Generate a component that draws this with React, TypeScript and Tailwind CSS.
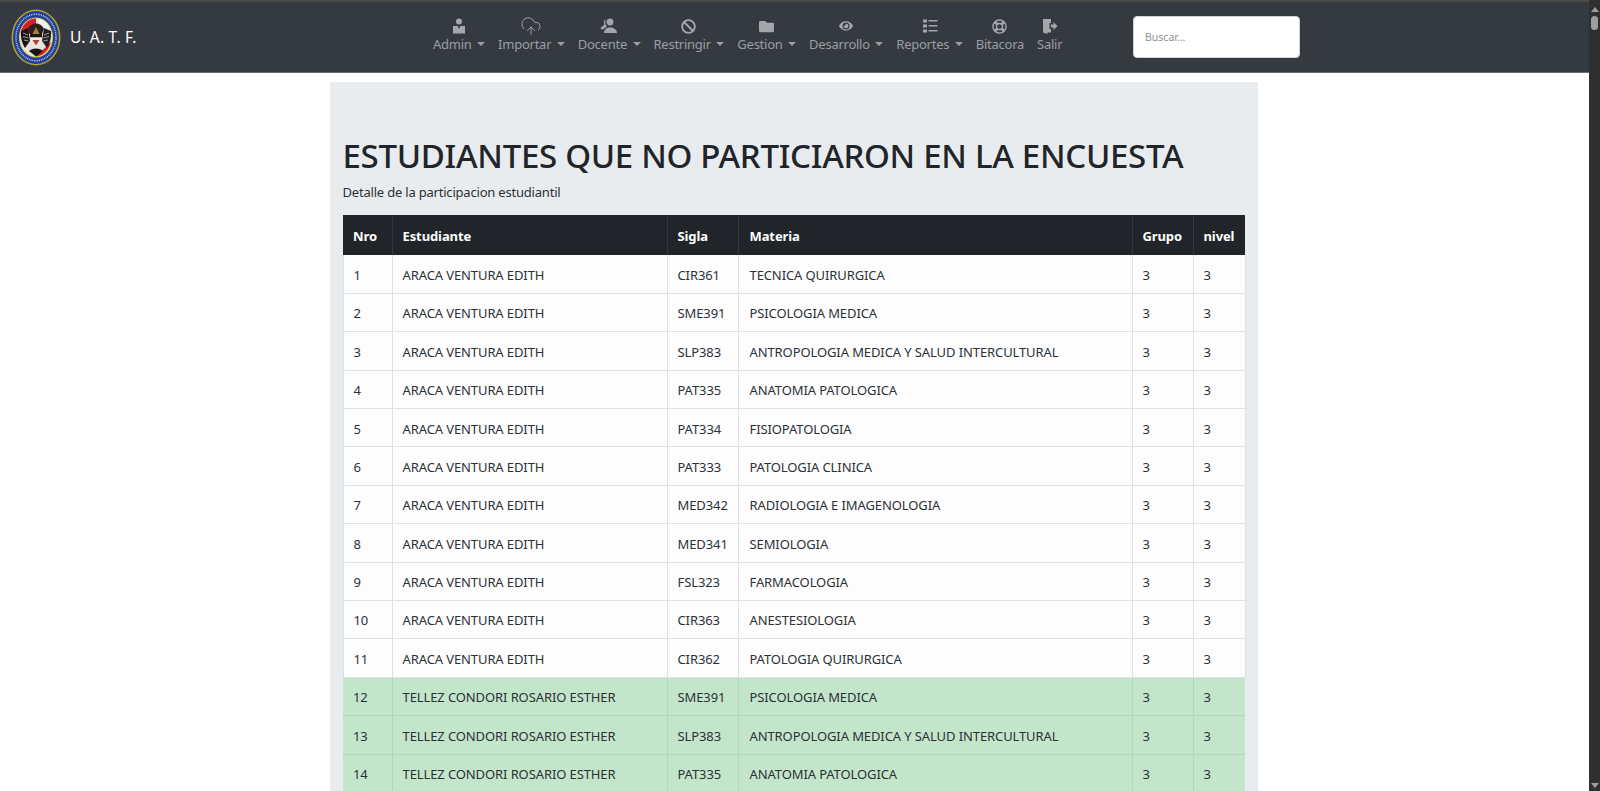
import { CloudUpload } from "lucide-react"
import { FaBan, FaFolder, FaEye, FaRegLifeRing } from "react-icons/fa"

// Types
interface Row {
    sigla: string;
    materia: string;
}

const aracaRows: Row[] = [
    { sigla: "CIR361", materia: "TECNICA QUIRURGICA" },
    { sigla: "SME391", materia: "PSICOLOGIA MEDICA" },
    { sigla: "SLP383", materia: "ANTROPOLOGIA MEDICA Y SALUD INTERCULTURAL" },
    { sigla: "PAT335", materia: "ANATOMIA PATOLOGICA" },
    { sigla: "PAT334", materia: "FISIOPATOLOGIA" },
    { sigla: "PAT333", materia: "PATOLOGIA CLINICA" },
    { sigla: "MED342", materia: "RADIOLOGIA E IMAGENOLOGIA" },
    { sigla: "MED341", materia: "SEMIOLOGIA" },
    { sigla: "FSL323", materia: "FARMACOLOGIA" },
    { sigla: "CIR363", materia: "ANESTESIOLOGIA" },
    { sigla: "CIR362", materia: "PATOLOGIA QUIRURGICA" },
];

const tellezRows: Row[] = [
    { sigla: "SME391", materia: "PSICOLOGIA MEDICA" },
    { sigla: "SLP383", materia: "ANTROPOLOGIA MEDICA Y SALUD INTERCULTURAL" },
    { sigla: "PAT335", materia: "ANATOMIA PATOLOGICA" },
];

function AdminIcon() {
    return (
        <svg viewBox="0 0 16 16" className="w-4 h-4" fill="currentColor">
            <circle cx="8" cy="3.500" r="3" />
            <path d="M2 8h4.500L8 11l1.500-3H14v7.500H2z" />
        </svg>
    );
}

function DocenteIcon() {
    return (
        <svg viewBox="0 0 18 16" className="w-[18px] h-4" fill="currentColor">
            <circle cx="10" cy="4" r="3.400" />
            <path d="M4 15c0-3.500 2.500-5.500 6-5.500s7 2 7 5.500z" />
            <path d="M5.500 1.500C3.800 2 3.300 4 4.500 6.500 3 8 1.200 8.800 .5 11l2.800.6C4 10.500 5.500 9.500 6.800 9 5.500 7 5 4 5.500 1.500z" />
        </svg>
    );
}

function ReportesIcon() {
    return (
        <svg viewBox="0 0 16 16" className="w-4 h-4" fill="currentColor">
            <rect x="1" y="1.500" width="4" height="3" />
            <rect x="1" y="6.500" width="4" height="3" />
            <rect x="1" y="11.500" width="4" height="3" />
            <rect x="6.500" y="2" width="9" height="1.500" />
            <rect x="6.500" y="7" width="9" height="1.500" />
            <rect x="6.500" y="12" width="9" height="1.500" />
        </svg>
    );
}

function SalirIcon() {
    return (
        <svg viewBox="0 0 16 16" className="w-4 h-4" fill="currentColor">
            <path d="M1 1h8v4H7.500v6H9v3.500H5.500V16L1 14.500z" />
            <path d="M9 6.500h2.500V4l4 4-4 4V9.500H9z" />
        </svg>
    );
}

function UatfLogo() {
    return (
        <svg viewBox="0 0 100 114" className="w-[50px] h-[57px] shrink-0">
            <ellipse cx="50" cy="57" rx="49" ry="56" fill="#b3a52a" />
            <ellipse cx="50" cy="57" rx="46" ry="53" fill="#23409a" />
            <ellipse cx="50" cy="57" rx="40" ry="46.500" fill="none" stroke="#dfe3ee" strokeWidth="3" strokeDasharray="1.500 2" />
            <ellipse cx="50" cy="57" rx="34" ry="40" fill="#d8cf4a" />
            <ellipse cx="50" cy="57" rx="32" ry="38" fill="#e7e2dc" />
            <path d="M50 19c-13 0-24 8-30 24l30 12z" fill="#d81f26" />
            <path d="M52 19c12 1 22 9 28 24L60 50z" fill="#f4f1ea" />
            <path d="M20 66l30 29c-14-1-26-12-30-29z" fill="#e9e4dc" />
            <path d="M80 66L50 95c14-1 26-12 30-29z" fill="#d81f26" />
            {/* wings */}
            <path d="M20 44l14-6 4 26-10 14c-6-8-9-22-8-34z" fill="#191517" />
            <path d="M80 44l-14-6-4 26 10 14c6-8 9-22 8-34z" fill="#241f20" />
            <path d="M24 48l10 4M24 55l11 3M26 62l9 2M76 48l-10 4M76 55l-11 3M74 62l-9 2" stroke="#cfc9c2" strokeWidth="1.500" />
            <path d="M34 40c4-8 10-11 16-11s12 3 16 11l-4 10H38z" fill="#2a2020" />
            <path d="M43 50l7-14 7 14z" fill="#a9802f" />
            <rect x="38" y="50" width="24" height="7" fill="#1d1616" />
            <path d="M38 57h24c0 12-5 19-12 23-7-4-12-11-12-23z" fill="#ece8e2" />
            <path d="M43 62h14l-7 11z" fill="#c23a32" />
            <path d="M36 84c6-7 22-7 28 0l-14 11z" fill="#191517" />
        </svg>
    );
}

function NavItem({ icon, label, caret }: { icon: React.ReactNode; label: string; caret?: boolean }) {
    return (
        <a className="flex flex-col items-center px-[6.5px] pb-[3px] text-[#9b9da0]">
            <span className="h-[17px] flex items-center justify-center text-[#a4a6a9]">{icon}</span>
            <span className="flex items-center text-[13px] tracking-[-0.25px] leading-[19px] whitespace-nowrap">
                {label}
                {caret && <span className="ml-[5.5px] w-0 h-0 border-x-[4px] border-x-transparent border-t-[4px] border-t-[#9b9da0]" />}
            </span>
        </a>
    );
}

function TableRow({ nro, name, row, green }: { nro: number; name: string; row: Row; green?: boolean }) {
    const cell = green
        ? "px-[10px] pt-[3px] h-[38.4px] border-b border-l border-[#b4d5be] first:border-l-0 whitespace-nowrap overflow-hidden"
        : "px-[10px] pt-[3px] h-[38.4px] border-b border-l border-[#dee2e6] whitespace-nowrap overflow-hidden";
    return (
        <tr className={green ? "bg-[#c3e6cb] text-[#2c3136]" : "bg-[#fdfdfe] text-[#2c3136]"}>
            <td className={cell}>{nro}</td>
            <td className={cell}>{name}</td>
            <td className={cell}>{row.sigla}</td>
            <td className={`${cell} pl-[11px]`}>{row.materia}</td>
            <td className={cell}>3</td>
            <td className={green ? cell : `${cell} border-r`}>3</td>
        </tr>
    );
}

export default function App() {
    const th = "px-[10px] pt-[3px] font-bold text-left border-l border-[#32383e] first:border-l-0";
    return (
        <div className="h-[791px] overflow-hidden flex bg-white text-[#212529] font-['Noto_Sans','Open_Sans',sans-serif]">
            <div className="flex-1 min-w-0 flex flex-col">
                {/* Navbar */}
                <nav className="h-[73px] shrink-0 flex items-center bg-[#343a40] border-t-[2px] border-t-[#4a4a46] border-b border-b-[#6b6f73]">
                    <a className="w-[426.5px] shrink-0 pl-[11px] flex items-center gap-[9px] text-white text-[15.500px] tracking-[0.2px]">
                        <UatfLogo />
                        <span className="pt-[2px]">U. A. T. F.</span>
                    </a>
                    <div className="w-[642px] shrink-0 flex items-center">
                        <NavItem icon={<AdminIcon />} label="Admin" caret />
                        <NavItem icon={<CloudUpload className="w-[22px] h-[22px]" strokeWidth={1} />} label="Importar" caret />
                        <NavItem icon={<DocenteIcon />} label="Docente" caret />
                        <NavItem icon={<FaBan className="w-[15px] h-[15px]" />} label="Restringir" caret />
                        <NavItem icon={<FaFolder className="w-[15px] h-[15px]" />} label="Gestion" caret />
                        <NavItem icon={<FaEye className="w-[14px] h-[14px]" />} label="Desarrollo" caret />
                        <NavItem icon={<ReportesIcon />} label="Reportes" caret />
                        <NavItem icon={<FaRegLifeRing className="w-[15px] h-[15px]" />} label="Bitacora" />
                        <NavItem icon={<SalirIcon />} label="Salir" />
                    </div>
                    <input
                        placeholder="Buscar..."
                        className="ml-[64.5px] w-[167px] h-[42px] px-[11px] rounded-[4px] bg-white text-[10.500px] border border-[#ced4da] placeholder:text-[#8a9198]"
                    />
                </nav>

                {/* Content */}
                <main className="flex-1 min-h-0 overflow-hidden">
                    <div className="w-[928px] mt-[9px] ml-[330px] h-[800px] bg-[#e9ecef] px-[12.500px] pt-[52px]">
                        <h1 className="text-[33px] leading-[44px] font-medium tracking-[-0.29px] whitespace-nowrap">ESTUDIANTES QUE NO PARTICIARON EN LA ENCUESTA</h1>
                        <p className="text-[13px] tracking-[-0.2px] leading-[20px] mt-[4px] mb-[13px] text-[#2c3136]">Detalle de la participacion estudiantil</p>
                        <table className="w-[902px] table-fixed border-collapse text-[13px] tracking-[-0.1px]">
                            <colgroup>
                                <col className="w-[49px]" />
                                <col className="w-[275px]" />
                                <col className="w-[71px]" />
                                <col className="w-[394px]" />
                                <col className="w-[61px]" />
                                <col className="w-[52px]" />
                            </colgroup>
                            <thead>
                                <tr className="h-[40px] bg-[#212529] text-white">
                                    <th className={th}>Nro</th>
                                    <th className={th}>Estudiante</th>
                                    <th className={th}>Sigla</th>
                                    <th className={`${th} pl-[11px]`}>Materia</th>
                                    <th className={th}>Grupo</th>
                                    <th className={th}>nivel</th>
                                </tr>
                            </thead>
                            <tbody>
                                {aracaRows.map((row, i) => (
                                    <TableRow key={i} nro={i + 1} name="ARACA VENTURA EDITH" row={row} />
                                ))}
                                {tellezRows.map((row, i) => (
                                    <TableRow key={i} nro={i + 12} name="TELLEZ CONDORI ROSARIO ESTHER" row={row} green />
                                ))}
                            </tbody>
                        </table>
                    </div>
                </main>
            </div>

            {/* Scrollbar */}
            <div className="w-[11px] shrink-0 bg-[#2f2f2f] flex flex-col items-center justify-between pt-[7px] pb-[3px]">
                <div className="flex flex-col items-center gap-[4px]">
                    <div className="w-0 h-0 border-x-[4px] border-x-transparent border-b-[5px] border-b-[#9e9e9e]" />
                    <div className="w-[7px] h-[14px] rounded-full bg-[#9e9e9e]" />
                </div>
                <div className="w-0 h-0 border-x-[4px] border-x-transparent border-t-[5px] border-t-[#9e9e9e]" />
            </div>
        </div>
    );
}
